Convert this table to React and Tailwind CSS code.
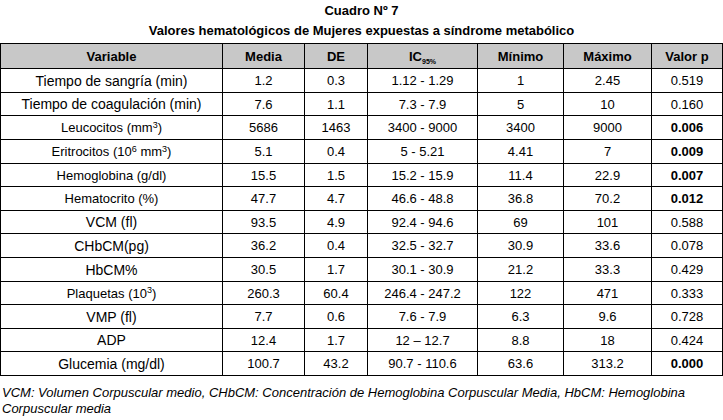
import React from 'react';

const cols = 'grid grid-cols-[222px_82px_63px_110px_86px_88px_71px]';

const rows = [
  { v: 'Tiempo de sangría (min)', big: true, d: ['1.2', '0.3', '1.12 - 1.29', '1', '2.45', '0.519'], h: 'h-[24px]' },
  { v: 'Tiempo de coagulación (min)', big: true, d: ['7.6', '1.1', '7.3 - 7.9', '5', '10', '0.160'], h: 'h-[23px]' },
  { v: <>Leucocitos (mm<sup className="text-[9px]">3</sup>)</>, d: ['5686', '1463', '3400 - 9000', '3400', '9000', '0.006'], bold: true, h: 'h-[24px]' },
  { v: <>Eritrocitos (10<sup className="text-[9px]">6</sup> mm<sup className="text-[9px]">3</sup>)</>, d: ['5.1', '0.4', '5 - 5.21', '4.41', '7', '0.009'], bold: true, h: 'h-[24px]' },
  { v: 'Hemoglobina (g/dl)', d: ['15.5', '1.5', '15.2 - 15.9', '11.4', '22.9', '0.007'], bold: true, h: 'h-[23px]' },
  { v: 'Hematocrito (%)', d: ['47.7', '4.7', '46.6 - 48.8', '36.8', '70.2', '0.012'], bold: true, h: 'h-[24px]' },
  { v: 'VCM (fl)', big: true, d: ['93.5', '4.9', '92.4 - 94.6', '69', '101', '0.588'], h: 'h-[23px]' },
  { v: 'CHbCM(pg)', big: true, d: ['36.2', '0.4', '32.5 - 32.7', '30.9', '33.6', '0.078'], h: 'h-[24px]' },
  { v: 'HbCM%', big: true, d: ['30.5', '1.7', '30.1 - 30.9', '21.2', '33.3', '0.429'], h: 'h-[24px]' },
  { v: <>Plaquetas (10<sup className="text-[9px]">3</sup>)</>, d: ['260.3', '60.4', '246.4 - 247.2', '122', '471', '0.333'], h: 'h-[23px]' },
  { v: 'VMP (fl)', big: true, d: ['7.7', '0.6', '7.6 - 7.9', '6.3', '9.6', '0.728'], h: 'h-[24px]' },
  { v: 'ADP', big: true, d: ['12.4', '1.7', '12 – 12.7', '8.8', '18', '0.424'], h: 'h-[23px]' },
  { v: 'Glucemia (mg/dl)', big: true, d: ['100.7', '43.2', '90.7 - 110.6', '63.6', '313.2', '0.000'], bold: true, h: 'h-[24px]' },
];

function Cell({ children, className = '' }) {
  return (
    <div className={`flex items-center justify-center border-r border-b border-black leading-none ${className}`}>
      <span>{children}</span>
    </div>
  );
}

export default function App() {
  return (
    <div className="w-[723px] h-[420px] bg-white text-black font-['Liberation_Sans',Arial,sans-serif] overflow-hidden">
      {/* Title */}
      <div className="pt-[1px] text-center font-bold text-[13px] leading-[20px]">
        <div>Cuadro Nº 7</div>
        <div>Valores hematológicos de Mujeres expuestas a síndrome metabólico</div>
      </div>

      {/* Table */}
      <div className="mt-[2px] border-l border-t border-black">
        <div className={`${cols} h-[25px] bg-[#c8c8c8] font-bold text-[13px]`}>
          <Cell>Variable</Cell>
          <Cell>Media</Cell>
          <Cell>DE</Cell>
          <Cell>
            IC<sub className="text-[7px] relative top-[3px]">95%</sub>
          </Cell>
          <Cell>Mínimo</Cell>
          <Cell>Máximo</Cell>
          <Cell>Valor p</Cell>
        </div>
        {rows.map((r, i) => (
          <div key={i} className={`${cols} ${r.h} text-[13px]`}>
            <Cell className={r.big ? 'text-[14px]' : 'text-[13px]'}>{r.v}</Cell>
            {r.d.map((x, j) => (
              <Cell key={j} className={j === 5 && r.bold ? 'font-bold' : ''}>
                {x}
              </Cell>
            ))}
          </div>
        ))}
      </div>

      {/* Footnote */}
      <p className="mt-[9px] pl-[2px] italic text-[13px] leading-[16px]">
        VCM: Volumen Corpuscular medio, CHbCM: Concentración de Hemoglobina Corpuscular Media, HbCM: Hemoglobina
        Corpuscular media
      </p>
    </div>
  );
}
